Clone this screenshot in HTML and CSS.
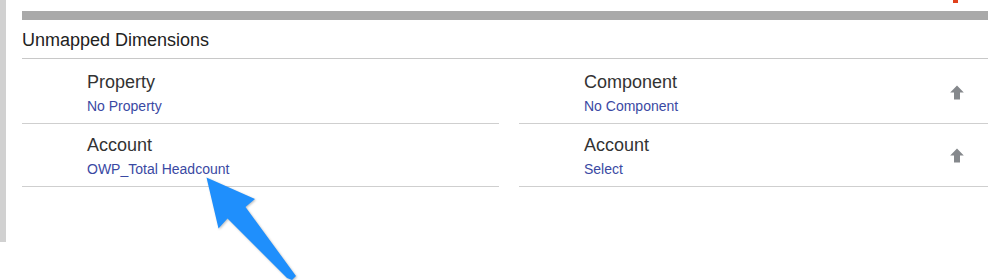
FILE: index.html
```html
<!DOCTYPE html>
<html lang="en">
<head>
    <meta charset="UTF-8">
    <title>Unmapped Dimensions</title>
    <link rel="stylesheet" href="styles.css">
</head>
<body>
  <div class="frame">
    <div class="edge"></div>
    <div class="main">
      <div class="toolbar"><span class="flag"></span></div>
      <div class="topbar"></div>
      <h2 class="section-title">Unmapped Dimensions</h2>

      <div class="mapping">
        <div class="col">
          <div class="dim-row">
            <div class="dim-text">
              <div class="dim-name">Property</div>
              <a class="dim-value" href="#">No Property</a>
            </div>
          </div>
          <div class="dim-row">
            <div class="dim-text">
              <div class="dim-name">Account</div>
              <a class="dim-value" href="#">OWP_Total Headcount</a>
            </div>
          </div>
        </div>

        <div class="col">
          <div class="dim-row">
            <div class="dim-text">
              <div class="dim-name">Component</div>
              <a class="dim-value" href="#">No Component</a>
            </div>
            <svg class="up-icon" width="14" height="15" viewBox="0 0 14 15"><polygon points="7,0.5 13.8,7.5 10,7.5 10,14.5 4,14.5 4,7.5 0.2,7.5" fill="#85888c"/></svg>
          </div>
          <div class="dim-row">
            <div class="dim-text">
              <div class="dim-name">Account</div>
              <a class="dim-value" href="#">Select</a>
            </div>
            <svg class="up-icon" width="14" height="15" viewBox="0 0 14 15"><polygon points="7,0.5 13.8,7.5 10,7.5 10,14.5 4,14.5 4,7.5 0.2,7.5" fill="#85888c"/></svg>
          </div>
        </div>
      </div>
    </div>
  </div>

  <!-- annotation arrow drawn over the page -->
  <svg class="callout" width="110" height="112" viewBox="0 0 110 112">
    <polygon points="6.5,7.5 55,29 45.5,37 96,106 92,110 87,108 27.5,48.5 18.5,58.5" fill="#1f8ffc"/>
  </svg>
</body>
</html>
```

FILE: styles.css
```css
body {
  font-family: "Liberation Sans", Arial, sans-serif;
  margin: 0;
  padding: 0;
  background: #fff;
  overflow: hidden;
}

.frame {
  display: flex;
  align-items: flex-start;
  height: 280px;
}

.edge {
  width: 6px;
  height: 242px;
  background-color: #d1d1d1;
  flex-shrink: 0;
}

.main {
  flex: 1;
  padding-left: 16px;
}

.toolbar {
  height: 11px;
  display: flex;
  justify-content: flex-end;
  padding-right: 30px;
}

.flag {
  width: 5px;
  height: 3px;
  background-color: #e0401c;
}

.topbar {
  height: 9px;
  background-color: #a9a9a9;
}

.section-title {
  margin: 0;
  padding: 9px 0 7px 0;
  font-size: 18px;
  font-weight: normal;
  line-height: 22px;
  color: #222;
  border-bottom: 1px solid #c8c8c8;
}

.mapping {
  display: grid;
  grid-template-columns: 477px 1fr;
  column-gap: 20px;
  padding-top: 2px;
}

.dim-row {
  display: flex;
  align-items: center;
  padding: 10px 24px 8px 65px;
  border-bottom: 1px solid #cfcfcf;
}

.dim-text {
  flex: 1;
}

.dim-name {
  font-size: 18px;
  line-height: 22px;
  color: #333;
}

.dim-value {
  display: block;
  margin-top: 4px;
  font-size: 14px;
  line-height: 18px;
  color: #3a49a3;
  text-decoration: none;
}

.up-icon {
  display: block;
  margin-top: -2px;
}

.callout {
  position: absolute;
  left: 200px;
  top: 170px;
  filter: drop-shadow(1px 1px 1px rgba(0, 0, 0, 0.25));
}
```
